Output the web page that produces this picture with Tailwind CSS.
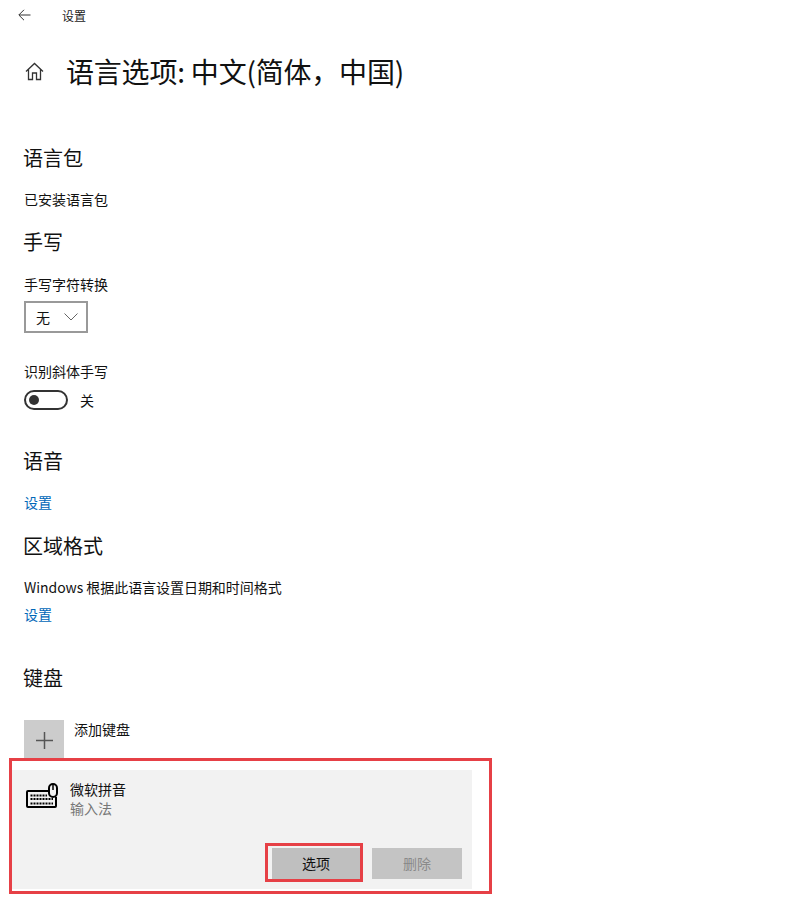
<!DOCTYPE html>
<html lang="zh-CN">
<head>
  <meta charset="UTF-8">
  <title>设置</title>
  <script src="https://cdn.jsdelivr.net/npm/@tailwindcss/browser@4"></script>
</head>
<body class="bg-white text-black font-['Noto_Sans_CJK_SC','Noto_Sans',sans-serif]">
  <div class="relative w-[788px] h-[897px] overflow-hidden">
    <!-- 顶部导航 -->
    <div class="flex items-center h-[32px] pl-[18px]">
      <svg width="13" height="12" viewBox="0 0 13 12" fill="none" stroke="#333" stroke-width="1" class="-mt-[2px]"><path d="M12.5 6H1M6 .8L.8 6 6 11.2"/></svg>
      <span class="ml-[31px] text-[12px] leading-[16px] text-[#222]">设置</span>
    </div>

    <!-- 标题 -->
    <div class="flex items-center h-[40px] mt-[19px] pl-[25px]">
      <svg width="19" height="19" viewBox="0 0 19 19" fill="none" stroke="#333" stroke-width="1.3"><path d="M1 9.5L9.5 1.500 18 9.5M3.500 7.500V17.500H7.500V11H11.500V17.500H15.500V7.500"/></svg>
      <h1 class="ml-[22px] text-[28px] leading-[40px] font-normal text-[#111] tracking-[-0.2px]">语言选项: 中文(简体，中国)</h1>
    </div>

    <div class="pl-[24px]">
      <h2 class="-ml-[1px] mt-[52px] text-[20px] leading-[30px] font-normal text-[#111]">语言包</h2>
      <p class="mt-[16px] text-[14px] leading-[20px] text-[#111]">已安装语言包</p>

      <h2 class="-ml-[1px] mt-[18px] text-[20px] leading-[30px] font-normal text-[#111]">手写</h2>
      <p class="mt-[17px] text-[14px] leading-[20px] text-[#111]">手写字符转换</p>
      <div class="mt-[7px] flex items-center justify-between w-[64px] h-[32px] border-2 border-[#999] pl-[10px] pr-[8px] text-[14px] text-[#111]">
        <span>无</span>
        <svg width="14" height="8" viewBox="0 0 14 8" fill="none" stroke="#666" stroke-width="1"><path d="M.5.5L7 7 13.500.5"/></svg>
      </div>

      <p class="mt-[28px] text-[14px] leading-[20px] text-[#111]">识别斜体手写</p>
      <div class="mt-[9px] flex items-center h-[20px]">
        <div class="flex items-center w-[44px] h-[20px] rounded-full border-2 border-[#333] pl-[3px]">
          <div class="w-[10px] h-[10px] rounded-full bg-[#333]"></div>
        </div>
        <span class="ml-[12px] text-[14px] leading-[20px] text-[#111]">关</span>
      </div>

      <h2 class="-ml-[1px] mt-[36px] text-[20px] leading-[30px] font-normal text-[#111]">语音</h2>
      <a class="block mt-[16px] text-[14px] leading-[20px] text-[#0067b8]">设置</a>

      <h2 class="-ml-[1px] mt-[19px] text-[20px] leading-[30px] font-normal text-[#111]">区域格式</h2>
      <p class="mt-[16px] text-[14px] leading-[20px] text-[#111] tracking-[-0.05px]">Windows 根据此语言设置日期和时间格式</p>
      <a class="block mt-[7px] text-[14px] leading-[20px] text-[#0067b8]">设置</a>

      <h2 class="-ml-[1px] mt-[39px] text-[20px] leading-[30px] font-normal text-[#111]">键盘</h2>

      <div class="mt-[27px] flex items-start">
        <div class="flex items-center justify-center w-[40px] h-[40px] bg-[#cccccc]">
          <svg width="17" height="17" viewBox="0 0 17 17" fill="none" stroke="#555" stroke-width="1.5"><path d="M8.500 0V17M0 8.500H17"/></svg>
        </div>
        <span class="-mt-[1px] ml-[10px] text-[14px] leading-[20px] text-[#111]">添加键盘</span>
      </div>
    </div>

    <!-- 输入法面板 -->
    <div class="ml-[12px] mt-[10px] w-[460px] h-[119px] bg-[#f2f2f2] flex flex-col">
      <div class="flex items-start pt-[10px] pl-[14px]">
        <svg class="mt-[3px] w-[32px] h-[26px] shrink-0" viewBox="0 0 32 26" fill="none" stroke="#000" stroke-width="2">
          <path d="M22 8H2a1 1 0 0 0-1 1V23a1 1 0 0 0 1 1H29a1 1 0 0 0 1-1V14"/>
          <rect x="23" y="1" width="8" height="13" rx="4"/>
          <path d="M27 2V7" stroke-width="1.5"/>
          <path d="M4.500 12.500H21M4.500 16H27M4.500 20.500H27" stroke-width="2" stroke-dasharray="2 1"/>
        </svg>
        <div class="ml-[12px] -mt-[1px]">
          <p class="text-[14px] leading-[20px] text-[#111]">微软拼音</p>
          <p class="text-[14px] leading-[18px] text-[#777]">输入法</p>
        </div>
      </div>
      <div class="mt-auto mb-[10px] mr-[10px] flex justify-end gap-[12px]">
        <button class="w-[88px] h-[31px] bg-[#bfbfbf] text-[14px] text-[#111]">选项</button>
        <button class="w-[90px] h-[31px] bg-[#c4c4c4] text-[14px] text-[#8a8a8a]">删除</button>
      </div>
    </div>

    <!-- 红色标注框 -->
    <div class="absolute left-[9px] top-[758px] w-[483px] h-[136px] border-[3px] border-[#e64046]"></div>
    <div class="absolute left-[265px] top-[843px] w-[98px] h-[39px] border-[3px] border-[#e64046]"></div>
  </div>
</body>
</html>
